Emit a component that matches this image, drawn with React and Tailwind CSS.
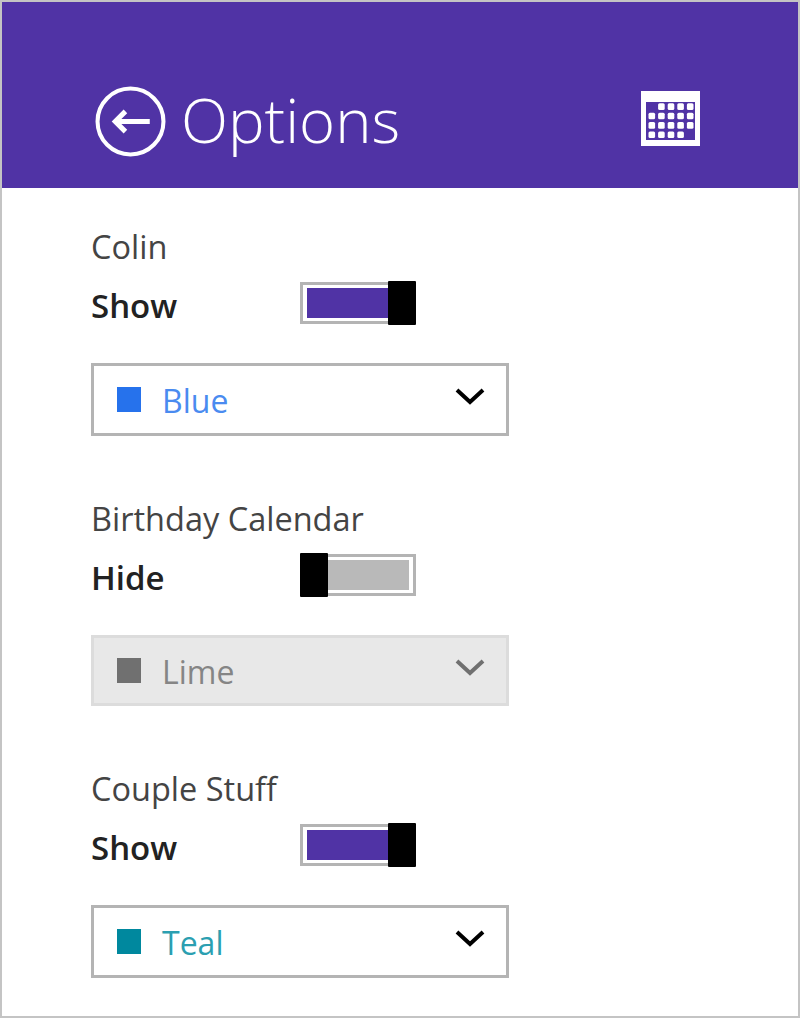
import React from "react";

const font = "font-['Open_Sans',sans-serif]";

const Toggle = ({ on }) => (
  <div className={`relative w-[116px] h-[44px] flex items-center ${on ? "justify-end" : "justify-start"}`}>
    <div className="absolute left-0 right-0 top-[1px] bottom-[1px] border-[3px] border-[#b4b4b4] px-[4px] py-[3px]">
      <div className={`w-full h-full ${on ? "bg-[#5033a5]" : "bg-[#b9b9b9]"}`} />
    </div>
    <div className="relative w-[28px] h-[44px] bg-black rounded-[1px]" />
  </div>
);

const Chevron = ({ color }) => (
  <svg width="30" height="18" viewBox="0 0 30 18" fill="none">
    <path d="M2 3 L15 15 L28 3" stroke={color} strokeWidth="4" />
  </svg>
);

const Select = ({ label, swatch, text, disabled, className }) => (
  <div
    className={`w-[418px] flex items-center pl-[23px] pr-[21px] border-[3px] ${className} ${
      disabled ? "bg-[#e8e8e8] border-[#dcdcdc]" : "bg-white border-[#b4b4b4]"
    }`}
  >
    <div className={`w-[24px] h-[25px] ${swatch}`} />
    <span className={`ml-[21px] text-[32px] leading-none mt-[2px] ${text}`}>{label}</span>
    <div className="ml-auto -mt-[8px]">
      <Chevron color={disabled ? "#707070" : "#000000"} />
    </div>
  </div>
);

const CalendarSection = ({ name, state, on, children, className }) => (
  <section className={className}>
    <div className="h-[40px] text-[32.5px] leading-[40px] text-[#444444] font-normal">{name}</div>
    <div className="mt-[14px] flex items-center h-[44px]">
      <div className="w-[209px] text-[33px] font-semibold text-[#222222] leading-none mt-[4px]">{state}</div>
      <Toggle on={on} />
    </div>
    {children}
  </section>
);

const CalendarIcon = () => (
  <svg width="59" height="55" viewBox="0 0 59 55">
    <rect width="59" height="55" fill="#ffffff" />
    <rect x="5" y="11" width="49" height="38" fill="#5033a5" />
    {[0, 1, 2, 3].map((r) =>
      [0, 1, 2, 3, 4].map((c) =>
        (r === 0 && c === 0) || (r === 3 && c === 4) ? null : (
          <rect key={`${r}-${c}`} x={7.5 + c * 9.6} y={12.3 + r * 9.4} width="6.6" height="6.6" rx="1.5" fill="#ffffff" />
        )
      )
    )}
  </svg>
);

export default function App() {
  return (
    <div className={`w-[800px] h-[1018px] bg-white border-2 border-[#c4c4c4] overflow-hidden ${font}`}>
      <header className="h-[186px] bg-[#5033a5] flex items-center pt-[52px] pl-[93px] pr-[98px] text-white">
        <svg width="71" height="71" viewBox="0 0 70 70" fill="none">
          <circle cx="35" cy="35" r="32.5" stroke="#ffffff" strokeWidth="4" />
          <path d="M54 35 H21" stroke="#ffffff" strokeWidth="5" />
          <path d="M30 25 L20 35 L30 45" stroke="#ffffff" strokeWidth="5" />
        </svg>
        <h1 className="ml-[15px] text-[61.5px] font-[350] leading-none -mt-[2px]">Options</h1>
        <div className="ml-auto -mt-[6px]">
          <CalendarIcon />
        </div>
      </header>
      <main className="pl-[89px]">
        <CalendarSection name="Colin" state="Show" on className="pt-[39px]">
          <Select label="Blue" swatch="bg-[#2672ec]" text="text-[#4a8bf0]" className="mt-[38px] h-[73px]" />
        </CalendarSection>
        <CalendarSection name="Birthday Calendar" state="Hide" className="pt-[63px]">
          <Select label="Lime" swatch="bg-[#707070]" text="text-[#858585]" disabled className="mt-[38px] h-[71px]" />
        </CalendarSection>
        <CalendarSection name="Couple Stuff" state="Show" on className="pt-[63px]">
          <Select label="Teal" swatch="bg-[#00889e]" text="text-[#2b9fb1]" className="mt-[38px] h-[73px]" />
        </CalendarSection>
      </main>
    </div>
  );
}
